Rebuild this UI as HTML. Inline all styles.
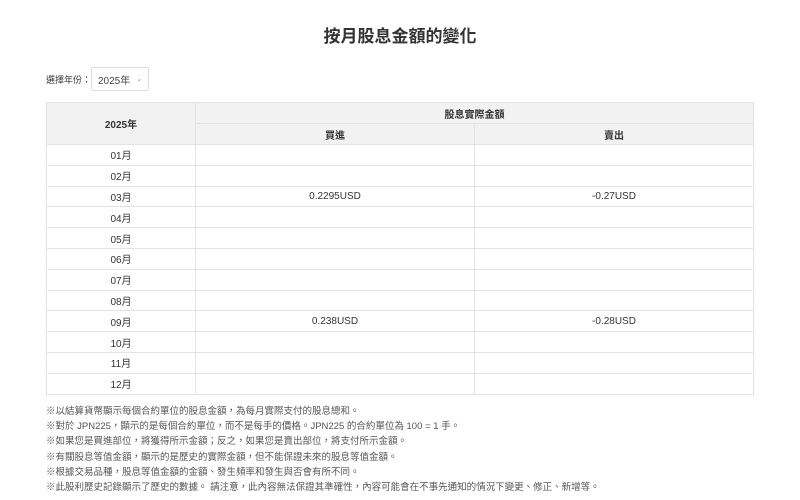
<!DOCTYPE html>
<html><head><meta charset="utf-8"><style>
body{margin:0;width:800px;height:500px;background:#fff;font-family:"Liberation Sans","Noto Sans CJK TC",sans-serif;color:#333;position:relative;overflow:hidden}
h1{position:absolute;top:22px;left:0;width:800px;text-align:center;margin:0;font-size:17px;font-weight:bold;color:#333}
.sel{position:absolute;top:67px;left:46px;font-size:9px;color:#333;display:flex;align-items:center}
.box{margin-left:0px;border:1px solid #ddd;border-radius:2px;width:56px;height:22px;display:flex;align-items:center;justify-content:center;font-size:10px;color:#444}
.box span{font-size:7px;margin-left:6px;color:#888}
table{position:absolute;top:102px;left:46px;width:708px;border-collapse:collapse;font-size:10px;color:#333}
td,th{border:1px solid #e3e3e3;text-align:center;padding:0;font-weight:normal}
th{background:#f2f2f2;font-weight:bold;height:20px}
td{height:19.8px}
.c1{width:148px}.c2{width:278px}
.notes{position:absolute;top:404px;left:46px;font-size:9.5px;line-height:15.2px;color:#555}
</style></head><body>
<h1>按月股息金額的變化</h1>
<div class="sel">選擇年份：<div class="box">2025年<span>⌄</span></div></div>
<table>
<tr><th rowspan="2" class="c1">2025年</th><th colspan="2">股息實際金額</th></tr>
<tr><th class="c2">買進</th><th>賣出</th></tr>
<tr><td>01月</td><td></td><td></td></tr>
<tr><td>02月</td><td></td><td></td></tr>
<tr><td>03月</td><td>0.2295USD</td><td>-0.27USD</td></tr>
<tr><td>04月</td><td></td><td></td></tr>
<tr><td>05月</td><td></td><td></td></tr>
<tr><td>06月</td><td></td><td></td></tr>
<tr><td>07月</td><td></td><td></td></tr>
<tr><td>08月</td><td></td><td></td></tr>
<tr><td>09月</td><td>0.238USD</td><td>-0.28USD</td></tr>
<tr><td>10月</td><td></td><td></td></tr>
<tr><td>11月</td><td></td><td></td></tr>
<tr><td>12月</td><td></td><td></td></tr>
</table>
<div class="notes">
※以結算貨幣顯示每個合約單位的股息金額，為每月實際支付的股息總和。<br>
※對於 JPN225，顯示的是每個合約單位，而不是每手的價格。JPN225 的合約單位為 100 = 1 手。<br>
※如果您是買進部位，將獲得所示金額；反之，如果您是賣出部位，將支付所示金額。<br>
※有關股息等值金額，顯示的是歷史的實際金額，但不能保證未來的股息等值金額。<br>
※根據交易品種，股息等值金額的金額、發生頻率和發生與否會有所不同。<br>
※此股利歷史記錄顯示了歷史的數據。 請注意，此內容無法保證其準確性，內容可能會在不事先通知的情況下變更、修正、新增等。
</div>
</body></html>
